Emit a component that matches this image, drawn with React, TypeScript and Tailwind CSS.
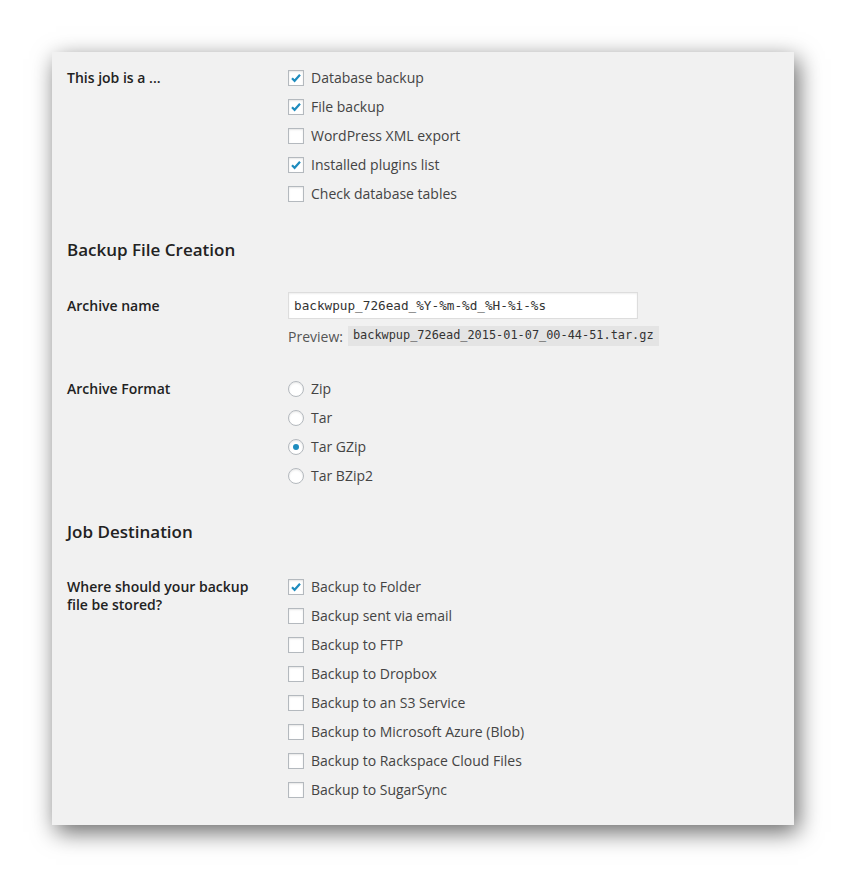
import React from "react";

const jobTypes = [
  { label: "Database backup", checked: true },
  { label: "File backup", checked: true },
  { label: "WordPress XML export", checked: false },
  { label: "Installed plugins list", checked: true },
  { label: "Check database tables", checked: false },
];

const formats = [
  { label: "Zip", checked: false },
  { label: "Tar", checked: false },
  { label: "Tar GZip", checked: true },
  { label: "Tar BZip2", checked: false },
];

const destinations = [
  { label: "Backup to Folder", checked: true },
  { label: "Backup sent via email", checked: false },
  { label: "Backup to FTP", checked: false },
  { label: "Backup to Dropbox", checked: false },
  { label: "Backup to an S3 Service", checked: false },
  { label: "Backup to Microsoft Azure (Blob)", checked: false },
  { label: "Backup to Rackspace Cloud Files", checked: false },
  { label: "Backup to SugarSync", checked: false },
];

function Checkbox({ checked }: { checked: boolean }) {
  return (
    <span className="w-4 h-4 bg-white border border-[#b4b9be] shadow-[inset_0_1px_2px_rgba(0,0,0,0.1)] flex items-center justify-center shrink-0">
      {checked && (
        <svg width="12" height="12" viewBox="0 0 12 12">
          <path d="M2 6.2 L4.6 8.8 L10 2.8" fill="none" stroke="#1e8cbe" strokeWidth="2.2" />
        </svg>
      )}
    </span>
  );
}

function Radio({ checked }: { checked: boolean }) {
  return (
    <span className="w-4 h-4 rounded-full bg-white border border-[#b4b9be] shadow-[inset_0_1px_2px_rgba(0,0,0,0.1)] flex items-center justify-center shrink-0">
      {checked && <span className="w-[6px] h-[6px] rounded-full bg-[#1e8cbe]" />}
    </span>
  );
}

function OptionList({ items, radio }: { items: { label: string; checked: boolean }[]; radio?: boolean }) {
  return (
    <div className="flex flex-col">
      {items.map((it) => (
        <div key={it.label} className="h-[29px] flex items-center gap-[7px] text-[#444]">
          {radio ? <Radio checked={it.checked} /> : <Checkbox checked={it.checked} />}
          <span>{it.label}</span>
        </div>
      ))}
    </div>
  );
}

function Row({ label, children }: { label: React.ReactNode; children: React.ReactNode }) {
  return (
    <div className="flex">
      <div className="w-[221px] pt-[6px] leading-[18px] font-semibold text-[#222] shrink-0">{label}</div>
      <div className="flex-1">{children}</div>
    </div>
  );
}

export default function App() {
  return (
    <div className="w-[846px] h-[877px] bg-white pt-[52px] pl-[52px]" style={{ fontFamily: '"Open Sans", sans-serif' }}>
      <div className="w-[742px] h-[773px] bg-[#f1f1f1] shadow-[4px_7px_22px_rgba(0,0,0,0.6)] pl-[15px] pt-[11px] text-[14px]">
        <Row label="This job is a ...">
          <OptionList items={jobTypes} />
        </Row>

        <h3 className="mt-[30px] h-[24px] leading-[24px] text-[17px] font-semibold text-[#222]">Backup File Creation</h3>

        <div className="mt-[30px] flex">
          <div className="w-[221px] leading-[27px] font-semibold text-[#222] shrink-0">Archive name</div>
          <div>
            <div className="w-[350px] h-[27px] bg-white border border-[#ddd] shadow-[inset_0_1px_2px_rgba(0,0,0,0.07)] px-[5px] flex items-center text-[12.7px] text-[#333]" style={{ fontFamily: '"DejaVu Sans Mono", monospace' }}>
              backwpup_726ead_%Y-%m-%d_%H-%i-%s
            </div>
            <div className="mt-[7px] h-[20px] flex items-center gap-[5px] text-[#555]">
              <span>Preview:</span>
              <code className="bg-[#e4e4e4] px-[5px] h-[20px] flex items-center text-[11.9px] text-[#333]" style={{ fontFamily: '"DejaVu Sans Mono", monospace' }}>
                backwpup_726ead_2015-01-07_00-44-51.tar.gz
              </code>
            </div>
          </div>
        </div>

        <div className="mt-[28px]">
          <Row label="Archive Format">
            <OptionList items={formats} radio />
          </Row>
        </div>

        <h3 className="mt-[30px] h-[24px] leading-[24px] text-[17px] font-semibold text-[#222]">Job Destination</h3>

        <div className="mt-[28px]">
          <Row label={<>Where should your backup<br />file be stored?</>}>
            <OptionList items={destinations} />
          </Row>
        </div>
      </div>
    </div>
  );
}
